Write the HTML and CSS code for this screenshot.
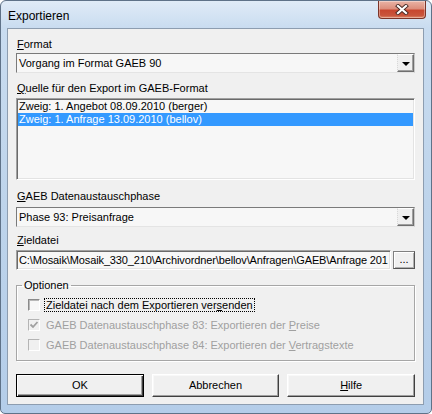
FILE: index.html
```html
<!DOCTYPE html>
<html lang="de">
<head>
<meta charset="utf-8">
<title>Exportieren</title>
<link rel="stylesheet" href="styles.css">
</head>
<body>
<div class="window">
  <div class="titlebar">
    <span class="title">Exportieren</span>
    <div class="close">
      <svg width="14" height="11" viewBox="0 0 14 11">
        <path d="M3 2 L11 9 M11 2 L3 9" stroke="#4a2a24" stroke-width="4" stroke-linecap="square"/>
        <path d="M3 2 L11 9 M11 2 L3 9" stroke="#ffffff" stroke-width="2.2" stroke-linecap="square"/>
      </svg>
    </div>
  </div>
  <div class="client">
    <div class="lbl lbl-first"><u>F</u>ormat</div>
    <div class="combo combo-1">
      <span class="combo-text">Vorgang im Format GAEB 90</span>
      <span class="combo-btn"><i class="arrow"></i></span>
    </div>

    <div class="lbl lbl-quelle"><u>Q</u>uelle für den Export im GAEB-Format</div>
    <div class="listbox">
      <div class="item">Zweig: 1. Angebot 08.09.2010 (berger)</div>
      <div class="item sel">Zweig: 1. Anfrage 13.09.2010 (bellov)</div>
    </div>

    <div class="lbl lbl-gaeb"><u>G</u>AEB Datenaustauschphase</div>
    <div class="combo combo-2">
      <span class="combo-text">Phase 93: Preisanfrage</span>
      <span class="combo-btn"><i class="arrow"></i></span>
    </div>

    <div class="lbl lbl-ziel"><u>Z</u>ieldatei</div>
    <div class="filerow">
      <div class="textfield"><span class="path">C:\Mosaik\Mosaik_330_210\Archivordner\bellov\Anfragen\GAEB\Anfrage 201</span></div>
      <div class="browse">...</div>
    </div>

    <fieldset class="group">
      <legend>Optionen</legend>
      <div class="chk-row">
        <span class="chk"></span>
        <span class="chk-label focus">Zieldatei nach dem Exportieren ver<u>s</u>enden</span>
      </div>
      <div class="chk-row disabled">
        <span class="chk">
          <svg width="10" height="10" viewBox="0 0 10 10"><path d="M1.5 4.5 L4 7 L8.5 2" fill="none" stroke="#a0a0a0" stroke-width="1.8"/></svg>
        </span>
        <span class="chk-label">GAEB Datenaustauschphase 83: Exportieren der <u>P</u>reise</span>
      </div>
      <div class="chk-row disabled">
        <span class="chk"></span>
        <span class="chk-label">GAEB Datenaustauschphase 84: Exportieren der <u>V</u>ertragstexte</span>
      </div>
    </fieldset>

    <div class="buttons">
      <div class="btn default">OK</div>
      <div class="btn">Abbrechen</div>
      <div class="btn"><u>H</u>ilfe</div>
    </div>
  </div>
</div>
</body>
</html>
```
FILE: styles.css
```css
* { box-sizing: border-box; }
html, body { margin: 0; padding: 0; background: #ffffff; }
body {
  font-family: "Liberation Sans", Arial, sans-serif;
  font-size: 11px;
  color: #000;
}
u { text-decoration: underline; text-underline-offset: 1px; }

.window {
  width: 432px;
  height: 414px;
  border: 1px solid #5f7288;
  border-radius: 6px 6px 5px 5px;
  background: linear-gradient(180deg, #e0ebf7 0px, #c9dcf0 27px, #bed4eb 200px, #b4cde9 100%);
  display: flex;
  flex-direction: column;
  overflow: hidden;
}

.titlebar {
  height: 27px;
  display: flex;
  justify-content: space-between;
  align-items: flex-start;
  flex-shrink: 0;
}
.title {
  font-size: 12px;
  line-height: 14px;
  margin: 8px 0 0 7px;
  color: #000;
}
.close {
  width: 48px;
  height: 18px;
  margin-right: 5px;
  border: 1px solid #7c3428;
  border-top: none;
  border-radius: 0 0 4px 4px;
  background: linear-gradient(180deg, #e9b4a6 0%, #dc8e7c 45%, #c8472f 55%, #c9553c 85%, #e08a6a 100%);
  display: flex;
  align-items: center;
  justify-content: center;
  box-shadow: inset 0 0 0 1px rgba(255,255,255,0.35);
}

.client {
  height: 377px;
  margin: 0 7px 0 6px;
  border: 1px solid #8d9db0;
  background: #f0f0f0;
  padding: 9px 8px 7px 8px;
  display: flex;
  flex-direction: column;
}

.lbl {
  height: 13px;
  line-height: 13px;
  white-space: nowrap;
  padding-left: 1px;
}
.lbl-quelle { margin-top: 9px; }
.lbl-gaeb { margin-top: 10px; }
.lbl-ziel { margin-top: 7px; }

.combo {
  height: 20px;
  display: flex;
  align-items: stretch;
  border-top: 1px solid #7a7a7a;
  border-left: 1px solid #7a7a7a;
  border-right: 1px solid #c8c8c8;
  border-bottom: 1px solid #e4e4e4;
  background: #f7f7f7;
}
.combo-1 { margin-top: 2px; }
.combo-2 { margin-top: 4px; }
.combo-text {
  flex: 1;
  line-height: 18px;
  padding-left: 2px;
  white-space: nowrap;
  overflow: hidden;
}
.combo-btn {
  width: 17px;
  border-top: 1px solid #ffffff;
  border-left: 1px dotted #d8d8d8;
  border-right: 1px solid #6f6f6f;
  border-bottom: 1px solid #6f6f6f;
  box-shadow: inset -1px -1px #a0a0a0;
  background: #f0f0f0;
  display: flex;
  align-items: center;
  justify-content: center;
}
.arrow {
  width: 0;
  height: 0;
  border-left: 4px solid transparent;
  border-right: 4px solid transparent;
  border-top: 4px solid #000;
  margin-top: 1px;
}

.listbox {
  margin-top: 3px;
  height: 82px;
  border-top: 1px solid #a0a0a0;
  border-left: 1px solid #a0a0a0;
  border-right: 1px solid #ffffff;
  border-bottom: 1px solid #ffffff;
  box-shadow: inset 1px 1px #6a6a6a, inset -1px -1px #e3e3e3;
  background: #f7f7f7;
  padding: 1px;
}
.item {
  height: 13px;
  line-height: 13px;
  padding-left: 1px;
  white-space: nowrap;
}
.item.sel {
  background: #3399ff;
  color: #fff;
}

.filerow {
  margin-top: 3px;
  height: 20px;
  display: flex;
  gap: 2px;
}
.textfield {
  flex: 1;
  min-width: 0;
  border-top: 1px solid #a0a0a0;
  border-left: 1px solid #a0a0a0;
  border-right: 1px solid #ffffff;
  border-bottom: 1px solid #ffffff;
  box-shadow: inset 1px 1px #6a6a6a, inset -1px -1px #e3e3e3;
  background: #f7f7f7;
  white-space: nowrap;
  line-height: 18px;
  padding-left: 2px;
}
.path { letter-spacing: -0.12px; }
.browse {
  width: 22px;
  height: 18px;
  margin-top: 1px;
  border: 1px solid #808080;
  border-right-color: #555;
  border-bottom-color: #555;
  box-shadow: inset 1px 1px #ffffff, inset -1px -1px #b0b0b0;
  background: #f0f0f0;
  text-align: center;
  line-height: 14px;
}

.group {
  margin: 9px 0 0 0;
  padding: 0 0 5px 0;
  height: 82px;
  border: 1px solid #a6a6a6;
  box-shadow: inset 1px 1px #ffffff, 1px 1px #ffffff;
  min-width: 0;
}
.group legend {
  margin-left: 5px;
  padding: 0 2px;
  height: 13px;
  line-height: 13px;
}
.chk-row {
  height: 20px;
  display: flex;
  align-items: center;
  padding-left: 11px;
}
.chk-row:first-of-type { margin-top: 3px; }
.chk {
  width: 12px;
  height: 12px;
  border-top: 1px solid #8a8a8a;
  border-left: 1px solid #8a8a8a;
  border-right: 1px solid #ffffff;
  border-bottom: 1px solid #ffffff;
  box-shadow: inset 1px 1px #b8b8b8;
  background: #f7f7f7;
  display: flex;
  align-items: center;
  justify-content: center;
  flex-shrink: 0;
}
.chk-label {
  margin-left: 4px;
  padding: 0 1px;
  line-height: 12px;
  border: 1px solid transparent;
  white-space: nowrap;
}
.chk-label.focus { border: 1px dotted #000; }
.disabled .chk-label { color: #a0a0a0; }
.disabled .chk { border-top-color: #b4b4b4; border-left-color: #b4b4b4; box-shadow: none; background: #f0f0f0; }

.buttons {
  margin-top: 13px;
  height: 23px;
  display: grid;
  grid-template-columns: 1fr 1fr 1fr;
  gap: 8px;
}
.btn {
  height: 23px;
  border-top: 1px solid #ffffff;
  border-left: 1px solid #ffffff;
  border-right: 1px solid #404040;
  border-bottom: 1px solid #404040;
  box-shadow: inset -1px -1px #a0a0a0, inset 1px 1px #f8f8f8;
  background: #f0f0f0;
  text-align: center;
  line-height: 21px;
}
.btn.default {
  border: 1px solid #000;
  box-shadow: inset 1px 1px #ffffff, inset -1px -1px #404040, inset -2px -2px #a0a0a0;
}
```
